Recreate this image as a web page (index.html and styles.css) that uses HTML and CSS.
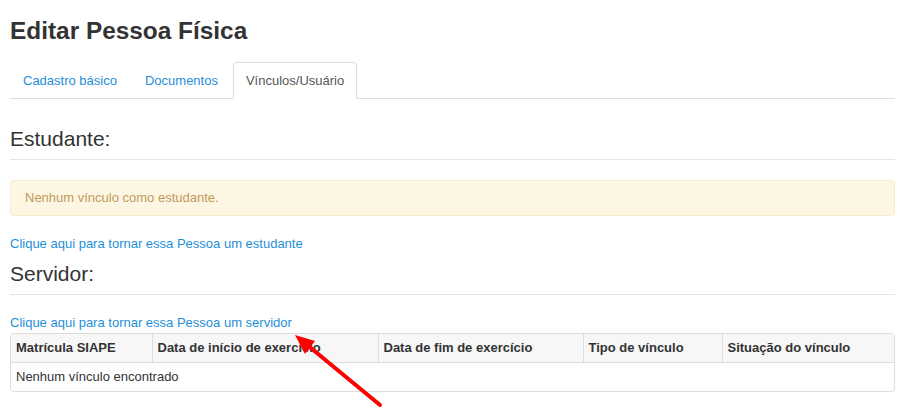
FILE: index.html
```html
<!DOCTYPE html>
<html lang="pt-BR">
<head>
<meta charset="utf-8">
<title>Editar Pessoa Física</title>
<link rel="stylesheet" href="styles.css">
</head>
<body>
<div class="page">
  <h1 class="title">Editar Pessoa Física</h1>
  <ul class="tabs">
    <li class="tab"><a href="#">Cadastro básico</a></li>
    <li class="tab"><a href="#">Documentos</a></li>
    <li class="tab active"><a href="#">Vínculos/Usuário</a></li>
  </ul>

  <h3 class="section-title first">Estudante:</h3>
  <div class="alert">Nenhum vínculo como estudante.</div>
  <a class="action-link" href="#">Clique aqui para tornar essa Pessoa um estudante</a>

  <h3 class="section-title">Servidor:</h3>
  <a class="action-link" href="#">Clique aqui para tornar essa Pessoa um servidor</a>
  <div class="table-wrap">
    <table class="grid">
      <colgroup>
        <col class="c1"><col class="c2"><col class="c3"><col class="c4"><col class="c5">
      </colgroup>
      <thead>
        <tr>
          <th>Matrícula SIAPE</th>
          <th>Data de início de exercício</th>
          <th>Data de fim de exercício</th>
          <th>Tipo de vínculo</th>
          <th>Situação do vínculo</th>
        </tr>
      </thead>
      <tbody>
        <tr><td colspan="5">Nenhum vínculo encontrado</td></tr>
      </tbody>
    </table>
  </div>
</div>
<svg class="annotation" width="900" height="417" viewBox="0 0 900 417" xmlns="http://www.w3.org/2000/svg">
  <line x1="380" y1="405" x2="306" y2="344" stroke="#ff0000" stroke-width="4" stroke-linecap="round"/>
  <polygon points="295,335 315,341 305,354" fill="#ff0000"/>
</svg>
</body>
</html>
```
FILE: styles.css
```css
html {
  margin: 0;
  padding: 0;
  background: #fff;
  overflow: hidden;
}
body {
  margin: 0;
  padding: 0;
  position: relative;
  min-height: 417px;
  font-family: "Liberation Sans", Arial, Helvetica, sans-serif;
  font-size: 13px;
  line-height: 18px;
  color: #333;
}
.page {
  padding: 0 5px 0 10px;
}
.title {
  margin: 18px 0 0;
  font-size: 24.4px;
  line-height: 26px;
  font-weight: bold;
  color: #333;
}
.tabs {
  list-style: none;
  margin: 18px 0 0;
  padding: 0;
  display: flex;
  border-bottom: 1px solid #ddd;
}
.tab {
  margin: 0 2px -1px 0;
}
.tab a {
  display: block;
  padding: 8px 12px;
  line-height: 19px;
  border: 1px solid transparent;
  border-radius: 4px 4px 0 0;
  color: #1e8fd9;
  text-decoration: none;
}
.tab.active a {
  color: #555;
  background: #fff;
  border-color: #ddd;
  border-bottom-color: #fff;
}
.section-title {
  margin: 9px 0 0;
  padding-bottom: 9px;
  font-size: 21px;
  line-height: 23px;
  font-weight: normal;
  color: #333;
  border-bottom: 1px solid #e5e5e5;
}
.section-title.first {
  margin-top: 28px;
}
.alert {
  margin-top: 20px;
  padding: 8px 14px;
  line-height: 18px;
  background: #fcf6e3;
  border: 1px solid #faebcc;
  border-radius: 4px;
  color: #c29a5c;
}
.action-link {
  display: block;
  margin-top: 19px;
  width: max-content;
  color: #1e8fd9;
  text-decoration: none;
}
.table-wrap {
  margin-top: 1px;
  border: 1px solid #ddd;
  border-radius: 4px;
  overflow: hidden;
}
.grid {
  width: 100%;
  border-collapse: collapse;
  table-layout: fixed;
}
.c1 { width: 141px; }
.c2 { width: 226px; }
.c3 { width: 205px; }
.c4 { width: 139px; }
.c5 { width: auto; }
.grid th {
  text-align: left;
  font-weight: bold;
  padding: 5px;
  line-height: 18px;
  background: #f7f7f7;
  border-left: 1px solid #ddd;
  border-bottom: 1px solid #ddd;
  white-space: nowrap;
}
.grid th:first-child {
  border-left: none;
}
.grid td {
  padding: 5px;
  line-height: 18px;
}
.annotation {
  position: absolute;
  left: 0;
  top: 0;
  pointer-events: none;
}
```
